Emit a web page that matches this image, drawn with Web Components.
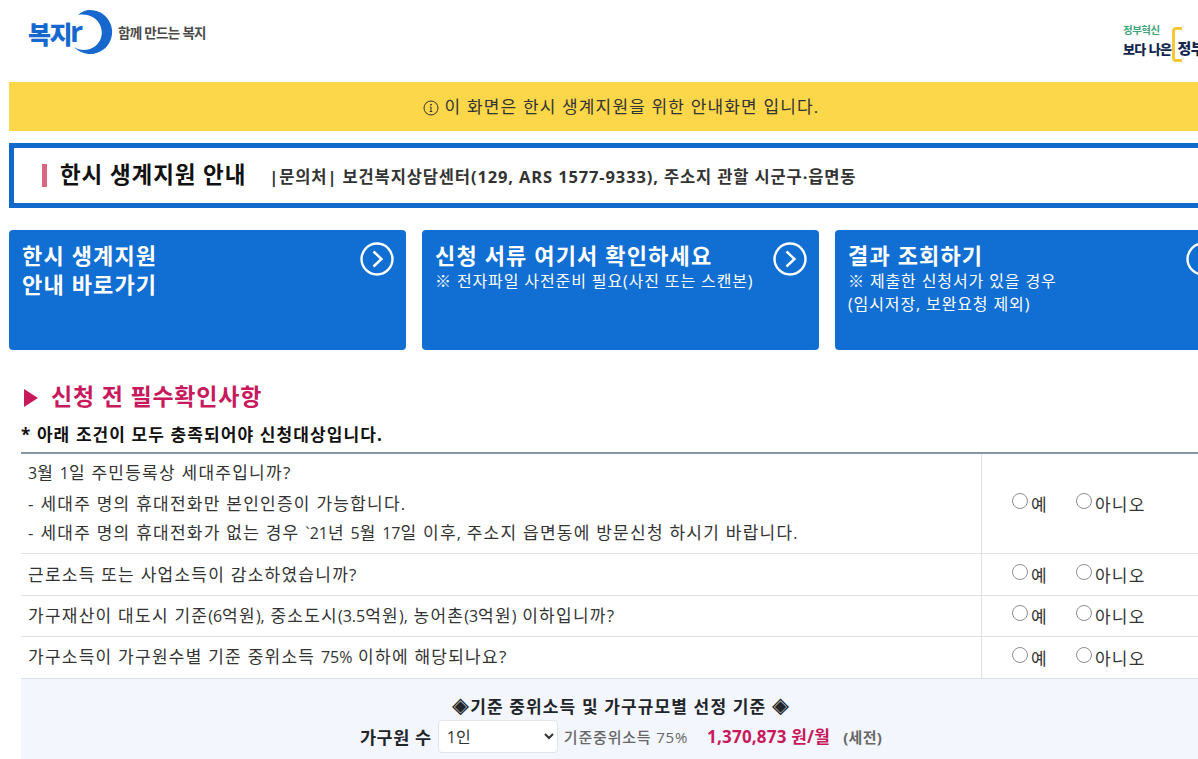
<!DOCTYPE html>
<html lang="ko"><head><meta charset="utf-8"><title>한시 생계지원 안내</title>
<style>
html,body{margin:0;padding:0;height:759px;overflow:hidden;background:#fff}
body{font-family:"Open Sans","Noto Sans CJK KR",sans-serif;color:#212529}
#page{width:1224px;margin-left:9px;display:block}
.n{letter-spacing:0;font-size:16px}
</style></head><body>
<div id="page">
<site-header></site-header>
<notice-bar>이 화면은 한시 생계지원을 위한 안내화면 입니다.</notice-bar>
<title-box heading="한시 생계지원 안내">|문의처| 보건복지상담센터(129, ARS 1577-9333), 주소지 관할 시군구·읍면동</title-box>
<card-row>
<action-card heading="한시 생계지원<br>안내 바로가기"></action-card>
<action-card heading="신청 서류 여기서 확인하세요">※ 전자파일 사전준비 필요(사진 또는 스캔본)</action-card>
<action-card heading="결과 조회하기">※ 제출한 신청서가 있을 경우<br>(임시저장, 보완요청 제외)</action-card>
</card-row>
<check-section>
<check-row h="100" name="a"><span class="n">3</span>월 <span class="n">1</span>일 주민등록상 세대주입니까?<br>- 세대주 명의 휴대전화만 본인인증이 가능합니다.<br>- 세대주 명의 휴대전화가 없는 경우 <span class="n">`21</span>년 <span class="n">5</span>월 <span class="n">17</span>일 이후<span class="n">,</span> 주소지 읍면동에 방문신청 하시기 바랍니다<span class="n">.</span></check-row>
<check-row h="42" name="b">근로소득 또는 사업소득이 감소하였습니까?</check-row>
<check-row h="41" name="c">가구재산이 대도시 기준<span class="n">(6</span>억원<span class="n">),</span> 중소도시<span class="n">(3.5</span>억원<span class="n">),</span> 농어촌<span class="n">(3</span>억원<span class="n">)</span> 이하입니까?</check-row>
<check-row h="42" name="d">가구소득이 가구원수별 기준 중위소득 <span class="n">75%</span> 이하에 해당되나요?</check-row>
<income-panel></income-panel>
</check-section>
</div>
<script>
const FONT='"Open Sans","Noto Sans CJK KR",sans-serif';
function def(name,render){
  customElements.define(name,class extends HTMLElement{
    connectedCallback(){ if(this.shadowRoot) return; const s=this.attachShadow({mode:'open'}); s.innerHTML=render(this); }
  });
}
def('site-header',()=>`<style>
:host{display:flex;justify-content:space-between;height:82px;overflow:visible}
.logo{display:flex;align-items:flex-start;padding:10px 0 0 19px}
.mark{position:relative;width:86px;height:46px}
.mark svg{display:block}
.ko{position:absolute;left:0;top:5px;font:800 25px/36px "Noto Sans CJK KR",sans-serif;color:#1668cf;letter-spacing:-1.5px}
.r{position:absolute;left:42px;top:3px;font:700 29px/36px "Open Sans",sans-serif;color:#1668cf}
.tag{font:700 13.5px/18px "Noto Sans CJK KR",sans-serif;color:#4a4a4a;letter-spacing:-.75px;margin:13px 0 0 4px;white-space:nowrap}
.gov{width:110px;position:relative;display:grid;grid-template-columns:auto auto;justify-content:start;column-gap:1px;padding-top:23px;height:40px}
.l{display:flex;flex-direction:column}
.g{font:700 10.5px/13px "Noto Sans CJK KR",sans-serif;color:#3fa67b;letter-spacing:-.5px}
.b{font:800 13px/19px "Noto Sans CJK KR",sans-serif;color:#14264f;letter-spacing:-.6px;white-space:nowrap;margin-top:3px}
.br{position:relative;width:50px;height:36px;margin-top:4px}
.br i{position:absolute;left:0;top:0;width:7px;height:29px;border:3px solid #f6c93a;border-right:0;border-radius:4px 0 0 4px}
.br span{position:absolute;left:5px;top:11px;font:800 15px/20px "Noto Sans CJK KR",sans-serif;color:#14264f;letter-spacing:-.5px;white-space:nowrap}
</style>
<div class="logo"><div class="mark">
<svg width="86" height="46" viewBox="0 0 86 46"><path fill="#1668cf" d="M62 0A22 22 0 1 1 46 37C52 41 60 41 66 37C73 32 76 24 72 15C69 8 60 3 50 5C53 2 57 0 62 0Z"/></svg>
<span class="ko">복지</span><span class="r">r</span></div><div class="tag">함께 만드는 복지</div></div>
<div class="gov"><div class="l"><span class="g">정부혁신</span><span class="b">보다 나은</span></div><div class="br"><i></i><span>정부</span></div></div>`);
def('notice-bar',()=>`<style>
:host{display:flex;align-items:center;justify-content:center;gap:6px;height:49px;background:#fdd74a;font:400 17px/24px ${FONT};letter-spacing:1.15px;color:#333}
svg{display:block;margin-top:3px}
</style><svg width="16" height="16" viewBox="0 0 16 16" fill="none" stroke="#333"><circle cx="8" cy="8" r="7"/><path d="M8 7v4.5M6.7 11.5h2.6M6.8 7h1.2"/><circle cx="8" cy="4.7" r=".5" fill="#333"/></svg><span><slot></slot></span>`);
def('title-box',e=>`<style>
:host{display:flex;align-items:center;box-sizing:border-box;height:65px;margin-top:12px;border:5px solid #1269cc;padding:0 0 0 28px;white-space:nowrap}
.bar{width:5px;height:23px;background:#d9667f;margin-right:13px}
h1{margin:0;font:700 22.5px/30px ${FONT};letter-spacing:.9px;color:#111;position:relative;top:-1px}
span{margin-left:23px;font:700 16.5px/22px ${FONT};letter-spacing:.87px;color:#333;position:relative;top:1px}
</style><div class="bar"></div><h1>${e.getAttribute('heading')}</h1><span><slot></slot></span>`);
def('card-row',()=>`<style>:host{display:grid;grid-template-columns:repeat(3,397px);gap:16px;margin-top:22px}</style><slot></slot>`);
def('action-card',e=>`<style>
:host{display:block;position:relative;box-sizing:border-box;height:120px;background:#116ed3;border-radius:4px;color:#fff;padding:11px 13px}
h2{margin:0;font:700 22px/29px ${FONT};letter-spacing:1.15px;white-space:nowrap}
p{margin:0;font:400 16px/23px ${FONT};letter-spacing:.88px;white-space:nowrap}
svg{position:absolute;right:12px;top:12px}
</style><h2>${e.getAttribute('heading')}</h2><p><slot></slot></p>
<svg width="34" height="34" viewBox="0 0 34 34" fill="none" stroke="#fff"><circle cx="17" cy="17" r="15.5" stroke-width="2.4"/><path d="M13.5 9.5l8 7.5-8 7.5" stroke-width="2.4"/></svg>`);
def('check-section',()=>`<style>
:host{display:block;margin:0 0 0 12px}
h3{margin:32px 0 0;padding-left:3px;font:700 23px/28px ${FONT};letter-spacing:.8px;color:#c7195c;display:flex;align-items:center;gap:13px}
h3 svg{display:block;margin-top:3px}
.note{font:700 17px/22px ${FONT};letter-spacing:1.1px;color:#111;margin-top:14px;padding-bottom:6px;border-bottom:2px solid #8695aa;height:22px}
</style><h3><svg width="14" height="18" viewBox="0 0 14 18"><path fill="#c7195c" d="M0 0l14 9-14 9z"/></svg>신청 전 필수확인사항</h3>
<div class="note">* 아래 조건이 모두 충족되어야 신청대상입니다.</div><slot></slot>`);
def('check-row',e=>{const h=e.getAttribute('h'),n=e.getAttribute('name');return `<style>
:host{display:grid;grid-template-columns:961px 1fr;height:${h}px;box-sizing:border-box;border-bottom:1px solid #dee2e6;font:400 17px/29.5px ${FONT};letter-spacing:1.25px;color:#333}
.q{display:flex;align-items:center;padding-left:7px;border-right:1px solid #dee2e6;white-space:nowrap}
.a{display:flex;align-items:center;padding-left:30px;gap:28px}
label{display:flex;align-items:center;gap:3px;font-size:17px;line-height:20px;padding-top:2px}
input{appearance:none;margin:0 0 8px;width:16px;height:16px;border:1px solid #8f8f8f;border-radius:50%;background:#fff;flex:none}
</style><div class="q"><div><slot></slot></div></div><div class="a"><label><input type="radio" name="${n}">예</label><label><input type="radio" name="${n}">아니오</label></div>`});
def('income-panel',()=>`<style>
:host{display:block;background:#f3f6fc;height:100px;padding-top:16px;text-align:center;color:#212529;width:1200px}
.t{font:700 17px/24px ${FONT};letter-spacing:1.13px}
.r{display:flex;justify-content:center;align-items:center;margin-top:1px;white-space:nowrap;height:33px}
b{font:700 17.5px/24px ${FONT};letter-spacing:.6px}
select{width:120px;height:33px;margin:0 6px 0 6px;padding:0 0 0 4px;border:1px solid #e1e5ea;border-radius:4px;background:#fff;font:400 16px ${FONT};color:#333}
.g{font:500 15px/22px ${FONT};letter-spacing:.8px;color:#666}
.m{font:700 17px/22px ${FONT};letter-spacing:.2px;color:#c7195c;margin-left:19px}
.s{font:700 15px/22px ${FONT};letter-spacing:.3px;color:#666;margin-left:13px}
</style><div class="t">◈기준 중위소득 및 가구규모별 선정 기준 ◈</div>
<div class="r"><b>가구원 수</b><select><option>1인</option></select><span class="g">기준중위소득 75%</span><span class="m">1,370,873 원/월</span><span class="s">(세전)</span></div>`);
</script></body></html>
